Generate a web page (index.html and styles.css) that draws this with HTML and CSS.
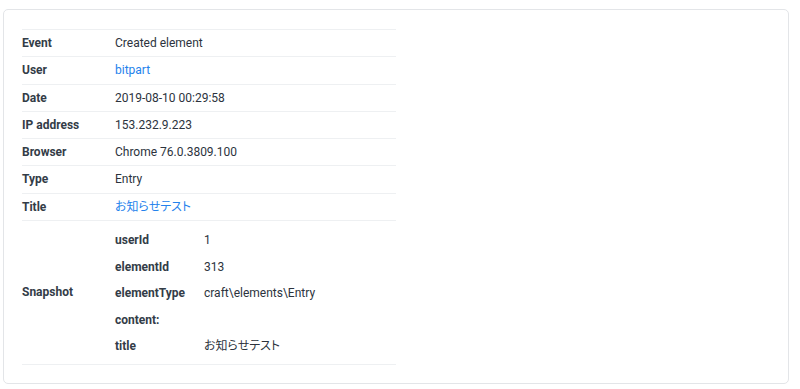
FILE: index.html
```html
<!DOCTYPE html>
<html lang="ja">
<head>
    <meta charset="UTF-8" />
    <meta name="viewport" content="width=device-width, initial-scale=1.0" />
    <title>Activity</title>
    <link rel="stylesheet" href="styles.css">
</head>
<body>
    <div class="pane">
        <table class="data">
            <tr><th>Event</th><td>Created element</td></tr>
            <tr><th>User</th><td><a href="#">bitpart</a></td></tr>
            <tr><th>Date</th><td>2019-08-10 00:29:58</td></tr>
            <tr><th>IP address</th><td>153.232.9.223</td></tr>
            <tr><th>Browser</th><td>Chrome 76.0.3809.100</td></tr>
            <tr><th>Type</th><td>Entry</td></tr>
            <tr><th>Title</th><td><a href="#" class="ja">お知らせテスト</a></td></tr>
            <tr class="snapshot">
                <th>Snapshot</th>
                <td>
                    <!-- 保存時のスナップショット -->
                    <table class="nested">
                        <tr><th>userId</th><td>1</td></tr>
                        <tr><th>elementId</th><td>313</td></tr>
                        <tr><th>elementType</th><td>craft\elements\Entry</td></tr>
                        <tr><th>content:</th><td></td></tr>
                        <tr><th>title</th><td class="ja">お知らせテスト</td></tr>
                    </table>
                </td>
            </tr>
        </table>
    </div>
</body>
</html>
```

FILE: styles.css
```css
/* 基本スタイル */
html, body {
    margin: 0;
    padding: 0;
    background: #fff;
    font-family: Roboto, "Noto Sans CJK JP", sans-serif;
    font-size: 12px;
    color: #2c333d;
}
body {
    padding: 9px 11px 4px 3px;
}
a {
    color: #2482ec;
    text-decoration: none;
}
.ja {
    font-feature-settings: "palt";
}

/* 外枠 */
.pane {
    border: 1px solid #e3e5e8;
    border-radius: 5px;
    padding: 19px 18px 18px;
}

/* 詳細テーブル */
.data {
    width: 374px;
    border-collapse: collapse;
}
.data > tbody > tr > th,
.data > tbody > tr > td {
    border-top: 1px solid #eef0f2;
    border-bottom: 1px solid #eef0f2;
    padding: 6px 0;
    line-height: 14.3px;
    text-align: left;
    vertical-align: middle;
}
.data > tbody > tr > th {
    width: 93px;
    font-weight: 700;
    color: #333c47;
}
.data > tbody > tr.snapshot > td {
    padding: 6px 0 4px;
}

/* スナップショット */
.nested {
    border-collapse: collapse;
}
.nested th,
.nested td {
    padding: 6px 0;
    line-height: 14.5px;
    text-align: left;
}
.nested th {
    width: 89px;
    font-weight: 700;
    color: #333c47;
}
```
